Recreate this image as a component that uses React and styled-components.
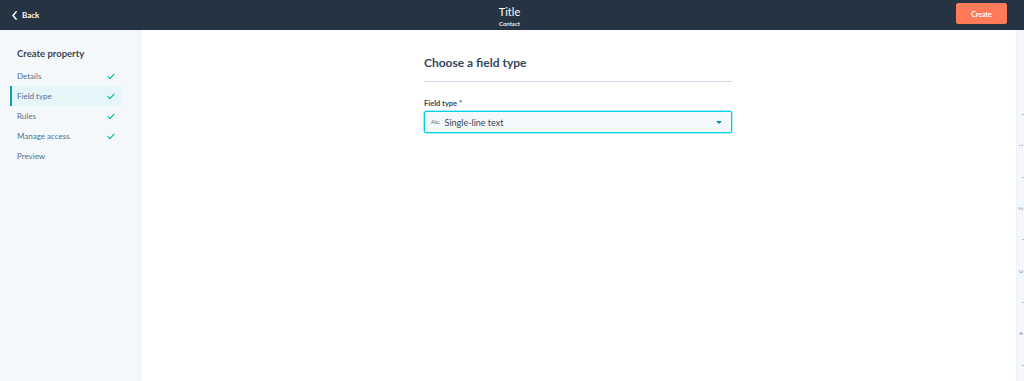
import React from "react";
import styled, { createGlobalStyle, css } from "styled-components";

const GlobalStyle = createGlobalStyle`
  html, body {
    margin: 0;
    padding: 0;
    height: 100%;
    background: #ffffff;
    font-family: "Lato", "Noto Sans", sans-serif;
    -webkit-font-smoothing: antialiased;
  }
  #root {
    height: 100%;
  }
`;

const Page = styled.div`
  display: flex;
  flex-direction: column;
  height: 381px;
  width: 1024px;
  overflow: hidden;
`;

const Header = styled.header`
  height: 30px;
  flex: none;
  background: #253342;
  display: grid;
  grid-template-columns: 1fr auto 1fr;
  align-items: center;
  padding: 0 17px 0 12px;
`;

const BackLink = styled.a`
  display: flex;
  align-items: center;
  gap: 5px;
  color: #ffffff;
  font-size: 8px;
  font-weight: 700;
  text-decoration: none;
  justify-self: start;
`;

const TitleBlock = styled.div`
  display: flex;
  flex-direction: column;
  align-items: center;
  color: #ffffff;
  line-height: 1;
`;

const Title = styled.div`
  font-size: 11px;
  margin-top: 2px;
`;

const Subtitle = styled.div`
  font-size: 6px;
  margin-top: 4px;
  font-weight: 600;
`;

const CreateButton = styled.button`
  justify-self: end;
  width: 51px;
  height: 21px;
  border: 1px solid #ff7a59;
  border-radius: 2px;
  background: #ff7a59;
  color: #ffffff;
  font-family: inherit;
  font-size: 7px;
  font-weight: 700;
  padding: 0;
  margin-top: -3px;
`;

const Body = styled.div`
  flex: 1;
  display: flex;
  min-height: 0;
`;

const Sidebar = styled.nav`
  width: 140px;
  flex: none;
  background: #f5f8fa;
  box-shadow: 1px 0 3px rgba(45, 62, 80, 0.08);
  border-right: 1px solid #eaf0f6;
  padding: 18px 18px 0 10px;
  box-sizing: border-box;
  position: relative;
  z-index: 1;
`;

const SideHeading = styled.h2`
  margin: 0 0 7px 7px;
  font-size: 9.5px;
  font-weight: 700;
  color: #33475b;
`;

const StepList = styled.ul`
  list-style: none;
  margin: 0;
  padding: 0;
`;

const Step = styled.li`
  height: 20px;
  display: flex;
  align-items: center;
  justify-content: space-between;
  padding: 0 6px 0 5px;
  font-size: 8px;
  color: #516f90;
  border-left: 2px solid transparent;
  ${(p) =>
    p.active &&
    css`
      background: #e5f5f8;
      border-left-color: #00a4bd;
    `}
`;

const Main = styled.main`
  flex: 1;
  display: flex;
  justify-content: center;
  padding-top: 14px;
`;

const Form = styled.section`
  width: 308px;
`;

const FormHeading = styled.h1`
  margin: 0;
  padding: 11px 0 11px;
  font-size: 12px;
  font-weight: 700;
  color: #33475b;
  border-bottom: 1px solid #cbd6e2;
`;

const FieldLabel = styled.label`
  display: block;
  margin-top: 17px;
  font-size: 7.5px;
  font-weight: 700;
  color: #33475b;
`;

const Select = styled.div`
  margin-top: 3px;
  height: 22px;
  box-sizing: border-box;
  border: 1px solid #00d0e4;
  box-shadow: 0 0 0 1px rgba(0, 208, 228, 0.35);
  border-radius: 2px;
  background: #f5f8fa;
  display: flex;
  align-items: center;
  padding: 0 9px 0 6px;
  color: #33475b;
`;

const TypeTag = styled.span`
  font-size: 5px;
  color: #516f90;
  margin-right: 5px;
`;

const SelectValue = styled.span`
  flex: 1;
  font-size: 9px;
`;

const Caret = styled.span`
  width: 0;
  height: 0;
  border-left: 3.5px solid transparent;
  border-right: 3.5px solid transparent;
  border-top: 3.5px solid #0091ae;
  margin-top: 1px;
`;

const Ruler = styled.aside`
  width: 7px;
  flex: none;
  background: #f5f8fa;
  border-left: 1px solid #eef2f6;
  display: flex;
  flex-direction: column;
  align-items: flex-end;
  padding-top: 69px;
`;

const RulerMark = styled.div`
  height: 32.5px;
  width: 7px;
  display: flex;
  align-items: center;
  justify-content: ${(p) => (p.minor ? "flex-end" : "center")};
  ${(p) =>
    p.minor &&
    css`
      &::after {
        content: "";
        width: 2px;
        height: 1px;
        background: #b0bcc8;
      }
    `}
`;

const RulerNumber = styled.span`
  font-size: 5px;
  line-height: 5px;
  color: #6a7f94;
  transform: rotate(90deg);
  display: inline-block;
`;

const CheckIcon = () => (
  <svg width="8" height="7" viewBox="0 0 8 7" fill="none">
    <path d="M1 3.6 L3 5.6 L7 1.2" stroke="#00bda5" strokeWidth="1.2" strokeLinecap="round" strokeLinejoin="round" />
  </svg>
);

const ChevronLeft = () => (
  <svg width="5" height="9" viewBox="0 0 5 9" fill="none">
    <path d="M4.2 0.8 L1 4.5 L4.2 8.2" stroke="#ffffff" strokeWidth="1.4" strokeLinecap="round" strokeLinejoin="round" />
  </svg>
);

const steps = [
  { label: "Details", done: true },
  { label: "Field type", done: true, active: true },
  { label: "Rules", done: true },
  { label: "Manage access", done: true },
  { label: "Preview", done: false },
];

const rulerMarks = [
  { minor: true },
  { n: "1" },
  { minor: true },
  { n: "2" },
  { minor: true },
  { n: "3" },
  { minor: true },
  { n: "4" },
  { minor: true },
];

export default function App() {
  return (
    <Page>
      <GlobalStyle />
      <Header>
        <BackLink href="#">
          <ChevronLeft />
          Back
        </BackLink>
        <TitleBlock>
          <Title>Title</Title>
          <Subtitle>Contact</Subtitle>
        </TitleBlock>
        <CreateButton>Create</CreateButton>
      </Header>
      <Body>
        <Sidebar>
          <SideHeading>Create property</SideHeading>
          <StepList>
            {steps.map((s) => (
              <Step key={s.label} active={s.active}>
                <span>{s.label}</span>
                {s.done && <CheckIcon />}
              </Step>
            ))}
          </StepList>
        </Sidebar>
        <Main>
          <Form>
            <FormHeading>Choose a field type</FormHeading>
            <FieldLabel>Field type *</FieldLabel>
            <Select>
              <TypeTag>Abc</TypeTag>
              <SelectValue>Single-line text</SelectValue>
              <Caret />
            </Select>
          </Form>
        </Main>
        <Ruler>
          {rulerMarks.map((m, i) => (
            <RulerMark key={i} minor={m.minor}>
              {m.n && <RulerNumber>{m.n}</RulerNumber>}
            </RulerMark>
          ))}
        </Ruler>
      </Body>
    </Page>
  );
}
